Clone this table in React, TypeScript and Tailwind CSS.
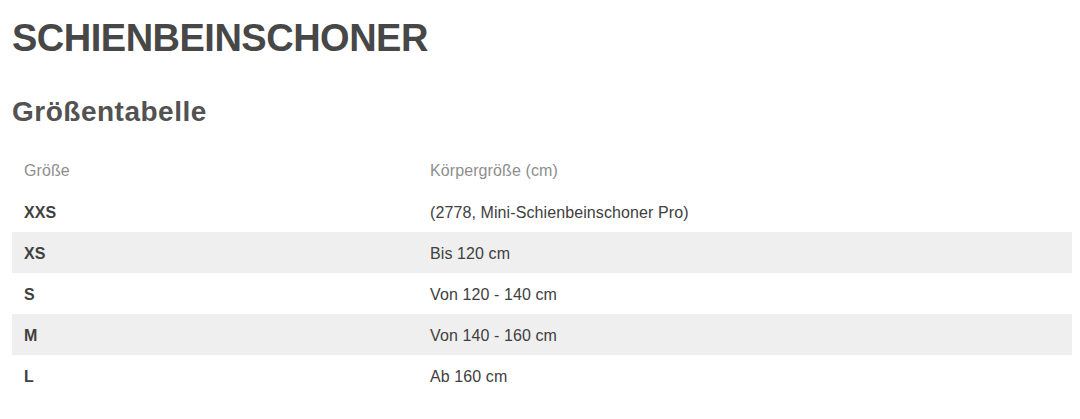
const ROWS: { size: string; height: string }[] = [
  { size: 'XXS', height: '(2778, Mini-Schienbeinschoner Pro)' },
  { size: 'XS', height: 'Bis 120 cm' },
  { size: 'S', height: 'Von 120 - 140 cm' },
  { size: 'M', height: 'Von 140 - 160 cm' },
  { size: 'L', height: 'Ab 160 cm' },
];

export default function App() {
  return (
    <div className="w-[1080px] h-[419px] bg-white overflow-hidden font-['Liberation_Sans',Arial,sans-serif]">
      <div className="pl-3 pr-2 pt-[16px]">
        <h1 className="text-[38px] leading-[44px] font-bold text-[#474747] tracking-[-0.5px]">
          SCHIENBEINSCHONER
        </h1>
        <h2 className="mt-[36px] text-[28px] leading-[31px] font-bold text-[#525252] tracking-[0.5px]">
          Größentabelle
        </h2>

        <div className="mt-[23px] text-[16px] tracking-[0.1px]">
          <div className="flex h-[41px] items-center text-[#8e8e8e]">
            <div className="w-[418px] pl-3">Größe</div>
            <div>Körpergröße (cm)</div>
          </div>
          {ROWS.map((row, i) => (
            <div
              key={row.size}
              className={`flex h-[41px] items-center pt-[2px] text-[#404040] ${i % 2 === 1 ? 'bg-[#efefef]' : ''}`}
            >
              <div className="w-[418px] pl-3 font-bold">{row.size}</div>
              <div>{row.height}</div>
            </div>
          ))}
        </div>
      </div>
    </div>
  );
}
